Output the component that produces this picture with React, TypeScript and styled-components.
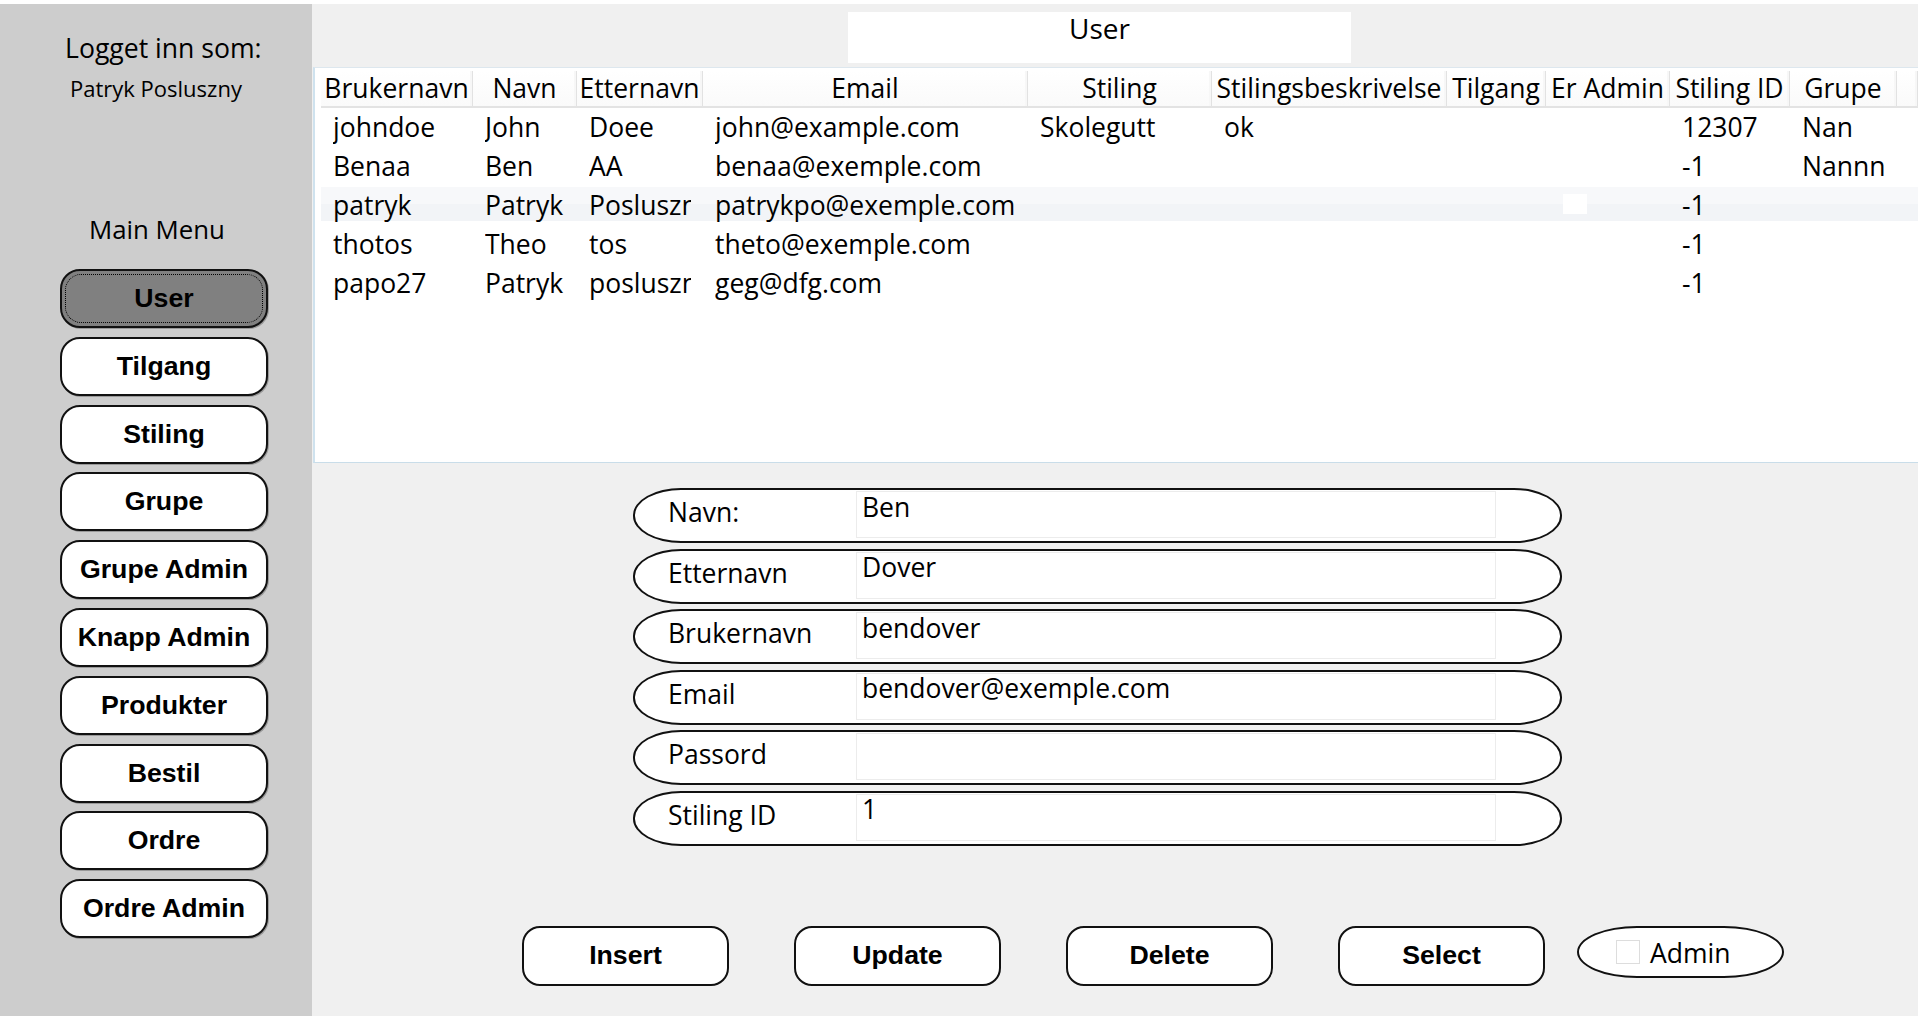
import React from "react";
import styled, { createGlobalStyle, css } from "styled-components";

const Global = createGlobalStyle`
  html, body { margin: 0; padding: 0; background: #ffffff; }
  body { font-family: "Open Sans", "Liberation Sans", sans-serif; color: #000; }
  * { box-sizing: border-box; }
`;

const Screen = styled.div`
  width: 1918px;
  height: 1016px;
  padding-top: 4px;
  display: flex;
  overflow: hidden;
  background: #ffffff;
`;

const Sidebar = styled.aside`
  width: 312px;
  flex: none;
  background: #cdcdcd;
  display: flex;
  flex-direction: column;
  padding-top: 29px;
`;

const SideLabel = styled.div<{ $indent: number; $size: number; $gap: number }>`
  margin-left: ${(p) => p.$indent}px;
  margin-top: ${(p) => p.$gap}px;
  font-family: "Open Sans", sans-serif;
  font-size: ${(p) => p.$size}px;
  line-height: ${(p) => (p.$size > 24 ? 30 : 26)}px;
  white-space: nowrap;
`;

const MenuList = styled.nav`
  margin: 25px 0 0 60px;
  width: 208px;
  display: flex;
  flex-direction: column;
  gap: 8.8px;
`;

const boldButton = css`
  font-family: "Liberation Sans", Arial, sans-serif;
  font-weight: 700;
  font-size: 26.7px;
  color: #000;
  border: 2px solid #111;
  border-radius: 20px;
  display: flex;
  align-items: center;
  justify-content: center;
  white-space: nowrap;
  cursor: pointer;
  padding: 0;
`;

const MenuButton = styled.button<{ $active?: boolean }>`
  ${boldButton};
  position: relative;
  height: 59px;
  background: ${(p) => (p.$active ? "#808080" : "#ffffff")};
  box-shadow: 1px 1px 0 rgba(0, 0, 0, 0.25);
  ${(p) =>
    p.$active &&
    css`
      &::after {
        content: "";
        position: absolute;
        inset: 3px;
        border: 1px dotted #000;
        border-radius: 16px;
      }
    `}
`;

const Main = styled.main`
  flex: 1;
  min-width: 0;
  background: #f0f0f0;
  display: flex;
  flex-direction: column;
  padding-top: 8px;
`;

const TitleBox = styled.div`
  margin-left: 536px;
  width: 503px;
  height: 51px;
  background: #ffffff;
  font-family: "Open Sans", sans-serif;
  font-size: 28px;
  line-height: 28px;
  padding-top: 1.5px;
  text-align: center;
`;

const Grid = styled.div`
  margin: 4px 0 0 1px;
  height: 396px;
  background: #ffffff;
  border: 1px solid #c9dde9;
  border-left: 2px solid #cfe2ee;
  border-top-color: #dde7ee;
  border-right: none;
  padding: 3px 0 0 6px;
  overflow: hidden;
`;

const columns = "152px 104px 126px 325px 184px 235px 99px 124px 120px 107px 1fr";

const HeaderRow = styled.div`
  display: grid;
  grid-template-columns: ${columns};
  height: 37px;
  border-bottom: 2px solid #e3e3e3;
  background: linear-gradient(#ffffff, #fafafa);
`;

const HeadCell = styled.div`
  font-size: 26.5px;
  line-height: 34px;
  height: 35px;
  text-align: center;
  white-space: nowrap;
  overflow: hidden;
  padding: 0 2px;
  border-right: 1px solid #e2e2e2;
  box-shadow: inset -2px 0 0 #f7f7f7;
`;

const DataRow = styled.div<{ $hover?: boolean }>`
  display: grid;
  grid-template-columns: ${columns};
  height: 39px;
  ${(p) =>
    p.$hover &&
    css`
      background: linear-gradient(
        to bottom,
        transparent 1px,
        #f7f8fa 1px,
        #f7f8fa 18px,
        #f2f4f7 18px,
        #f2f4f7 35px,
        transparent 35px
      );
    `}
`;

const Cell = styled.div`
  padding: 0 12px;
  min-width: 0;
`;

const CellText = styled.div`
  font-size: 26.5px;
  line-height: 38px;
  white-space: nowrap;
  overflow: hidden;
`;

const CheckCell = styled.div`
  padding: 8px 0 0 17px;
`;

const CheckBox = styled.div`
  width: 24px;
  height: 20px;
  background: #ffffff;
`;

const Form = styled.div`
  margin: 25px 0 0 321px;
  width: 929px;
  display: flex;
  flex-direction: column;
  gap: 5.5px;
`;

const Pill = styled.div`
  height: 55px;
  border: 2px solid #111;
  border-radius: 48px / 27px;
  background: #ffffff;
  display: flex;
  align-items: flex-start;
`;

const PillLabel = styled.div`
  width: 221px;
  flex: none;
  padding: 9px 0 0 33px;
  font-size: 26.5px;
  line-height: 26.5px;
  white-space: nowrap;
`;

const TextBox = styled.div`
  margin-top: 1px;
  width: 640px;
  height: 47px;
  background: #ffffff;
  border: 1px solid #ececec;
  padding: 1.5px 0 0 5px;
  font-size: 26.5px;
  line-height: 26.5px;
  white-space: nowrap;
`;

const Actions = styled.div`
  margin: 80px 0 0 210px;
  display: flex;
  align-items: flex-start;
`;

const ActionButton = styled.button`
  ${boldButton};
  width: 207px;
  height: 60px;
  margin-right: 65px;
  border-radius: 18px;
  background: #ffffff;
  &:last-of-type {
    margin-right: 32px;
  }
`;

const AdminToggle = styled.label`
  width: 207px;
  height: 52px;
  border: 2px solid #111;
  border-radius: 60px / 26px;
  background: #ffffff;
  display: flex;
  align-items: center;
  padding: 3px 0 0 37px;
  gap: 10px;
  font-size: 26.5px;
  line-height: 30px;
`;

const AdminBox = styled.span`
  width: 24px;
  height: 24px;
  border: 1px solid #dddddd;
  background: #ffffff;
  margin-top: -2px;
`;

const menu = [
  "User",
  "Tilgang",
  "Stiling",
  "Grupe",
  "Grupe Admin",
  "Knapp Admin",
  "Produkter",
  "Bestil",
  "Ordre",
  "Ordre Admin",
];

const headers = [
  "Brukernavn",
  "Navn",
  "Etternavn",
  "Email",
  "Stiling",
  "Stilingsbeskrivelse",
  "Tilgang",
  "Er Admin",
  "Stiling ID",
  "Grupe",
  "",
];

type Row = [string, string, string, string, string, string, string, string, string];

const rows: Row[] = [
  ["johndoe", "John", "Doee", "john@example.com", "Skolegutt", "ok", "", "12307", "Nan"],
  ["Benaa", "Ben", "AA", "benaa@exemple.com", "", "", "", "-1", "Nannn"],
  ["patryk", "Patryk", "Posluszny", "patrykpo@exemple.com", "", "", "", "-1", ""],
  ["thotos", "Theo", "tos", "theto@exemple.com", "", "", "", "-1", ""],
  ["papo27", "Patryk", "posluszny", "geg@dfg.com", "", "", "", "-1", ""],
];

const fields: [string, string][] = [
  ["Navn:", "Ben"],
  ["Etternavn", "Dover"],
  ["Brukernavn", "bendover"],
  ["Email", "bendover@exemple.com"],
  ["Passord", ""],
  ["Stiling ID", "1"],
];

export default function App() {
  return (
    <>
      <Global />
      <Screen>
        <Sidebar>
          <SideLabel $indent={65} $size={26.6} $gap={0}>
            Logget inn som:
          </SideLabel>
          <SideLabel $indent={70} $size={22} $gap={12}>
            Patryk Posluszny
          </SideLabel>
          <SideLabel $indent={89} $size={25.8} $gap={113}>
            Main Menu
          </SideLabel>
          <MenuList>
            {menu.map((m, i) => (
              <MenuButton key={m} $active={i === 0}>
                {m}
              </MenuButton>
            ))}
          </MenuList>
        </Sidebar>
        <Main>
          <TitleBox>User</TitleBox>
          <Grid>
            <HeaderRow>
              {headers.map((h, i) => (
                <HeadCell key={i}>{h}</HeadCell>
              ))}
            </HeaderRow>
            {rows.map((r, i) => (
              <DataRow key={i} $hover={i === 2}>
                {r.slice(0, 7).map((c, j) => (
                  <Cell key={j}>
                    <CellText>{c}</CellText>
                  </Cell>
                ))}
                <CheckCell>
                  <CheckBox />
                </CheckCell>
                <Cell>
                  <CellText>{r[7]}</CellText>
                </Cell>
                <Cell>
                  <CellText>{r[8]}</CellText>
                </Cell>
                <Cell />
              </DataRow>
            ))}
          </Grid>
          <Form>
            {fields.map(([label, value]) => (
              <Pill key={label}>
                <PillLabel>{label}</PillLabel>
                <TextBox>{value}</TextBox>
              </Pill>
            ))}
          </Form>
          <Actions>
            <ActionButton>Insert</ActionButton>
            <ActionButton>Update</ActionButton>
            <ActionButton>Delete</ActionButton>
            <ActionButton>Select</ActionButton>
            <AdminToggle>
              <AdminBox />
              Admin
            </AdminToggle>
          </Actions>
        </Main>
      </Screen>
    </>
  );
}
